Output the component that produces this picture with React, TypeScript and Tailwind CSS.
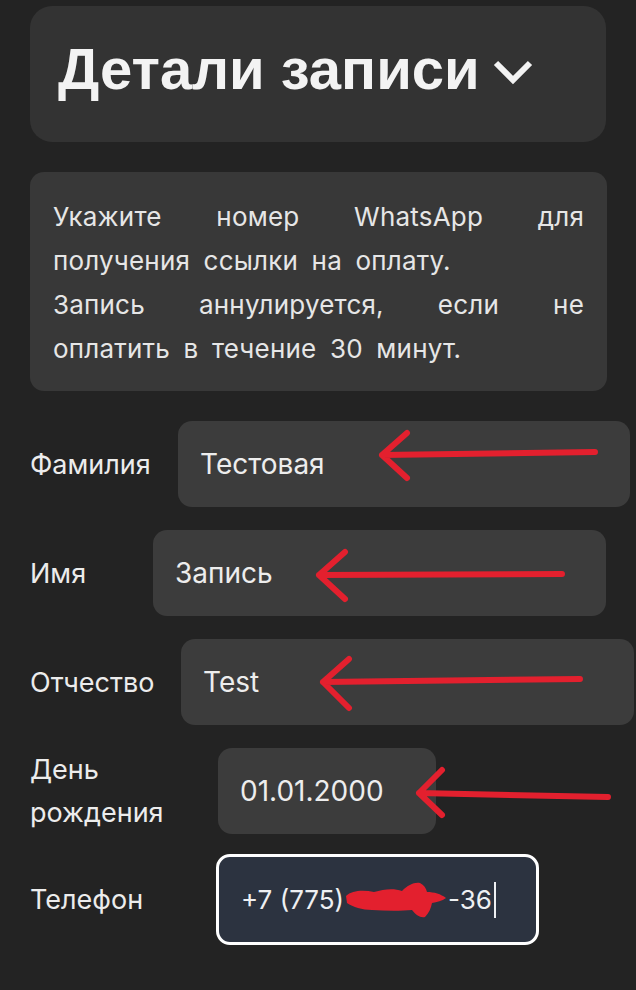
import React from 'react';

const RED = '#e3202e';

type Arrow = { tip: [number, number]; end: [number, number]; up: [number, number]; down: [number, number] };

const ArrowMark: React.FC<{ a: Arrow }> = ({ a }) => (
  <svg className="pointer-events-none absolute left-0 top-0 h-full w-[606px] overflow-visible" fill="none">
    <path
      d={`M${a.end[0]} ${a.end[1]} L${a.tip[0]} ${a.tip[1]} M${a.up[0]} ${a.up[1]} L${a.tip[0]} ${a.tip[1]} L${a.down[0]} ${a.down[1]}`}
      stroke={RED}
      strokeWidth={6}
      strokeLinecap="round"
      strokeLinejoin="round"
    />
  </svg>
);

type RowProps = {
  label: React.ReactNode;
  labelWidth: string;
  inputWidth: string;
  value: string;
  arrow: Arrow;
};

const Row: React.FC<RowProps> = ({ label, labelWidth, inputWidth, value, arrow }) => (
  <div className="relative flex items-center">
    <div className={`${labelWidth} shrink-0 text-[27px] leading-[43px] text-[#ececec]`}>{label}</div>
    <div className={`${inputWidth} flex h-[86px] shrink-0 items-center rounded-[14px] bg-[#3c3c3c] px-[22px] text-[28px] text-[#ededed]`}>
      {value}
    </div>
    <ArrowMark a={arrow} />
  </div>
);

export default function App() {
  return (
    <div className="min-h-[990px] overflow-hidden bg-[#232323] pl-[30px] pt-[6px] font-['Inter',sans-serif]">
      <div className="flex h-[136px] w-[576px] items-start rounded-[22px] bg-[#333333] pl-[28px] pt-[28px]">
        <h1 className="font-['Liberation_Sans',Arial,sans-serif] text-[58px] font-bold leading-[70px] text-[#f3f3f3]">
          Детали записи
        </h1>
        <svg className="ml-[12px] mt-[25px] h-[26px] w-[42px]" viewBox="0 0 42 26" fill="none">
          <path d="M4 4 L21 21 L38 4" stroke="#f3f3f3" strokeWidth={6} strokeLinejoin="miter" />
        </svg>
      </div>

      <div className="mt-[30px] w-[577px] rounded-[14px] bg-[#383838] px-[23px] pb-[20px] pt-[23px] text-[26px] leading-[44px] tracking-[0.2px] text-[#e6e6e6] [word-spacing:6px]">
        <div className="text-justify [text-align-last:justify]">Укажите номер WhatsApp для</div>
        <div>получения ссылки на оплату.</div>
        <div className="text-justify [text-align-last:justify]">Запись аннулируется, если не</div>
        <div>оплатить в течение 30 минут.</div>
      </div>

      <div className="mt-[30px] flex flex-col gap-[23px]">
        <Row
          label="Фамилия"
          labelWidth="w-[148px]"
          inputWidth="w-[452px]"
          value="Тестовая"
          arrow={{ tip: [352, 34], end: [565, 31], up: [377, 12], down: [377, 57] }}
        />
        <Row
          label="Имя"
          labelWidth="w-[123px]"
          inputWidth="w-[453px]"
          value="Запись"
          arrow={{ tip: [289, 45], end: [532, 44], up: [315, 22], down: [315, 69] }}
        />
        <Row
          label="Отчество"
          labelWidth="w-[151px]"
          inputWidth="w-[453px]"
          value="Test"
          arrow={{ tip: [293, 43], end: [550, 40], up: [319, 20], down: [319, 69] }}
        />
        <Row
          label={
            <>
              День
              <br />
              рождения
            </>
          }
          labelWidth="w-[188px]"
          inputWidth="w-[218px]"
          value="01.01.2000"
          arrow={{ tip: [389, 45], end: [578, 49], up: [412, 22], down: [412, 67] }}
        />

        <div className="-mt-[3px] flex items-center">
          <div className="w-[186px] shrink-0 text-[27px] leading-[43px] text-[#ececec]">Телефон</div>
          <div className="flex h-[91px] w-[323px] shrink-0 items-center rounded-[14px] border-[3px] border-white bg-[#2c3340] px-[22px] text-[26px] text-[#eef0f3]">
            <span>+7 (775)</span>
            <svg className="h-[40px] w-[104px]" viewBox="0 0 104 40" fill="none">
              <path
                d="M2 16 C8 10 20 10 30 12 C40 9 50 8 58 11 C64 5 70 2 76 3 C80 5 82 8 83 12 C90 12 97 14 102 18 C98 21 93 22 88 23 C87 28 85 33 81 37 C76 38 72 35 68 30 C58 31 42 31 28 30 C18 30 9 27 3 23 Z"
                fill={RED}
              />
            </svg>
            <span>-36</span>
            <span className="ml-[2px] h-[36px] w-[2px] bg-[#eef0f3]" />
          </div>
        </div>
      </div>
    </div>
  );
}
